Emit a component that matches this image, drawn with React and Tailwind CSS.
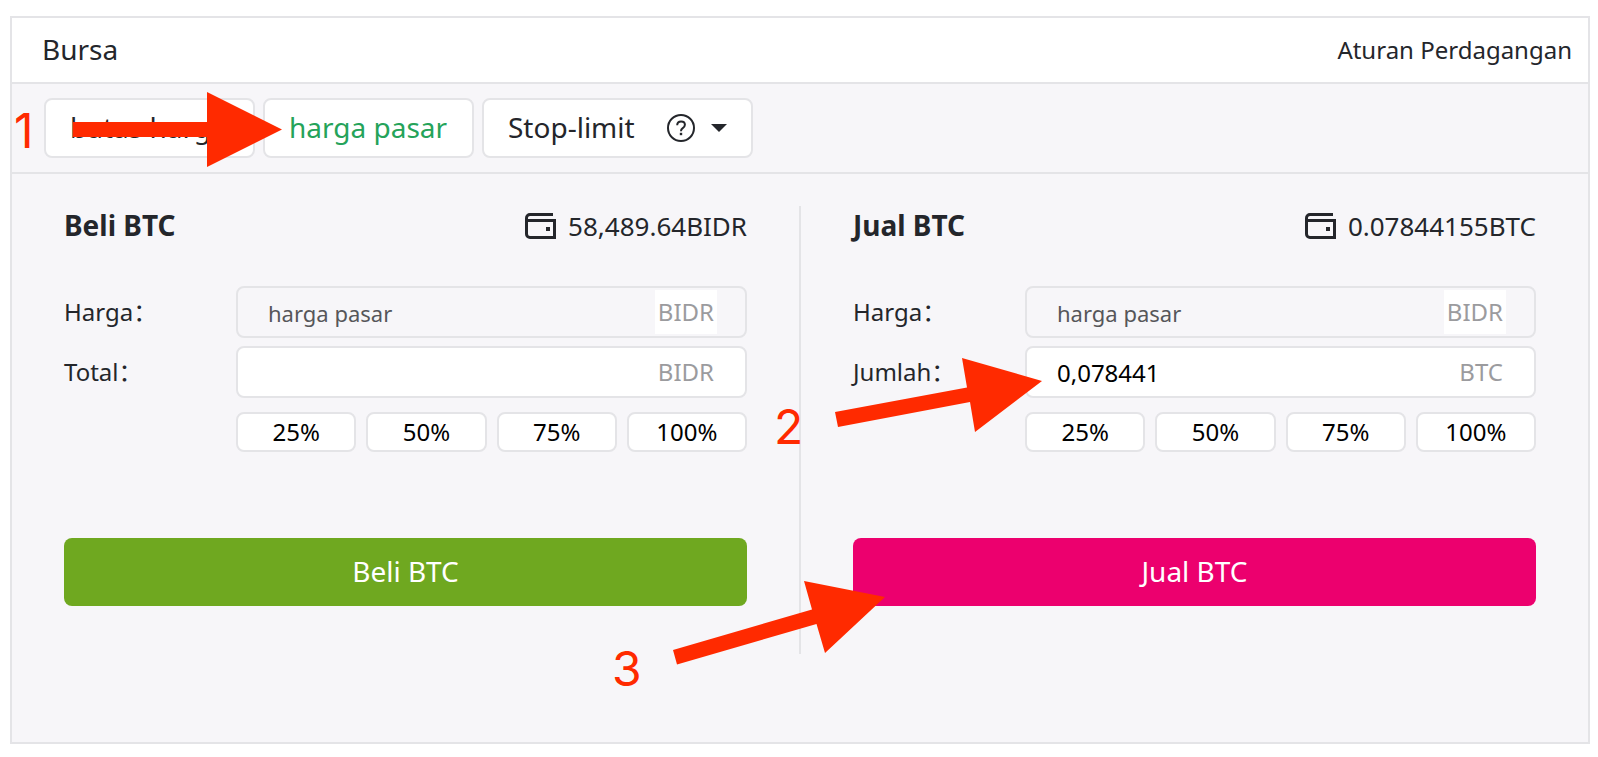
import { useState } from "react"

const percents = ["25%", "50%", "75%", "100%"]

function WalletIcon() {
  return (
    <svg width="31" height="26" viewBox="0 0 31 26" fill="none" stroke="#24262b" strokeWidth="3" aria-hidden="true">
      <path d="M28 1.5H5A3.5 3.5 0 0 0 1.5 5v16A3.5 3.5 0 0 0 5 24.5h24.5v-17H1.5" />
      <path d="M21 14h4v4h-4z" fill="#24262b" stroke="none" />
    </svg>
  )
}

function HelpIcon() {
  return (
    <svg width="28" height="28" viewBox="0 0 28 28" fill="none" stroke="#24262b" strokeWidth="2" aria-hidden="true">
      <circle cx="14" cy="14" r="13" />
      <path d="M10.2 11.2c0-2.4 1.6-3.8 3.9-3.8s3.8 1.3 3.8 3.4c0 2-1.2 2.8-2.4 3.6-1 .7-1.5 1.1-1.5 2.8" />
      <path d="M12.8 18.8h2.4v2.4h-2.4z" fill="#24262b" stroke="none" />
    </svg>
  )
}

function Field({ id, label, unit, value, placeholder, disabled, onChange }) {
  return (
    <div className="flex items-center">
      <label htmlFor={id} className="w-[172px] shrink-0">
        {label}：
      </label>
      <div
        className={`flex h-[52px] min-w-0 flex-1 items-center rounded-lg border-2 border-[#e4e4e7] pr-7 ${
          disabled ? "bg-transparent" : "bg-white"
        }`}
      >
        <input
          id={id}
          type="text"
          value={value}
          placeholder={placeholder}
          disabled={disabled}
          onChange={onChange}
          className="h-full min-w-0 flex-1 bg-transparent pl-[30px] text-black outline-none placeholder:text-[22px] placeholder:text-[#56565a]"
        />
        <span className="flex h-11 items-center bg-white px-[3px] text-[#9b9b9e]">{unit}</span>
      </div>
    </div>
  )
}

function OrderForm({ side, title, balance, amountLabel, amountUnit, initialAmount, buttonClass }) {
  const [amount, setAmount] = useState(initialAmount)

  return (
    <form className="min-w-0 flex-1 px-[52px]" onSubmit={(e) => e.preventDefault()}>
      <div className="flex h-10 items-center justify-between">
        <h2 className="text-[28px] font-bold">{title}</h2>
        <div className="flex items-center gap-3 text-[26px]">
          <WalletIcon />
          <span>{balance}</span>
        </div>
      </div>

      <div className="mt-10 flex flex-col gap-2">
        <Field id={`${side}-price`} label="Harga" unit="BIDR" value="" placeholder="harga pasar" disabled />
        <Field
          id={`${side}-amount`}
          label={amountLabel}
          unit={amountUnit}
          value={amount}
          onChange={(e) => setAmount(e.target.value)}
        />
      </div>

      <div className="mt-[14px] ml-[172px] grid grid-cols-4 gap-[10px]">
        {percents.map((percent) => (
          <button
            key={percent}
            type="button"
            className="flex h-10 items-center justify-center rounded-lg border-2 border-[#e4e4e7] bg-white text-black"
          >
            {percent}
          </button>
        ))}
      </div>

      <button type="submit" className={`mt-[86px] h-[68px] w-full rounded-lg text-[28px] text-white ${buttonClass}`}>
        {title}
      </button>
    </form>
  )
}

function Arrow({ className, width, height, points }) {
  return (
    <svg
      className={`pointer-events-none absolute ${className}`}
      width={width}
      height={height}
      viewBox={`0 0 ${width} ${height}`}
      aria-hidden="true"
    >
      <polygon points={points} fill="#ff2a00" />
    </svg>
  )
}

function Step({ className, children }) {
  return (
    <span className={`pointer-events-none absolute font-[Inter,sans-serif] text-5xl leading-none text-[#ff2a00] ${className}`}>
      {children}
    </span>
  )
}

export default function App() {
  const tab = "flex h-[60px] min-w-[211px] items-center rounded-lg border-2 border-[#e4e4e7] bg-white px-6 text-[28px]"

  return (
    <main className="relative bg-white pt-4 pr-2 pb-[13px] pl-[10px] font-['Noto_Sans','Noto_Sans_CJK_SC',sans-serif] text-2xl text-[#24262b]">
      <section className="border-2 border-[#e4e4e7] bg-[#f7f6f9]">
        <header className="flex h-[66px] items-center justify-between border-b-2 border-[#e4e4e7] bg-white pr-4 pl-[30px]">
          <h1 className="text-[28px]">Bursa</h1>
          <a href="#aturan">Aturan Perdagangan</a>
        </header>

        <nav className="flex gap-2 border-b-2 border-[#e4e4e7] px-8 py-[14px]">
          <button type="button" className={tab}>
            batas harga
          </button>
          <button type="button" className={`${tab} text-[#25a35a]`}>
            harga pasar
          </button>
          <button type="button" className={tab}>
            Stop-limit
            <span className="ml-8">
              <HelpIcon />
            </span>
            <svg className="ml-4" width="16" height="8" viewBox="0 0 16 8" aria-hidden="true">
              <path d="M0 0h16L8 8z" fill="#24262b" />
            </svg>
          </button>
        </nav>

        <div className="flex pt-8 pb-[88px]">
          <OrderForm
            side="buy"
            title="Beli BTC"
            balance="58,489.64BIDR"
            amountLabel="Total"
            amountUnit="BIDR"
            initialAmount=""
            buttonClass="bg-[#6fa820]"
          />
          <div className="h-[448px] w-[2px] bg-[#e4e4e7]" />
          <OrderForm
            side="sell"
            title="Jual BTC"
            balance="0.07844155BTC"
            amountLabel="Jumlah"
            amountUnit="BTC"
            initialAmount="0,078441"
            buttonClass="bg-[#ec006e]"
          />
        </div>
      </section>

      <Step className="top-[107px] left-[14px]">1</Step>
      <Arrow
        className="top-[92px] left-[73px]"
        width={209}
        height={75}
        points="0,30 134,30 134,0 209,37.5 134,75 134,45 0,45"
      />
      <Step className="top-[403px] left-[774px]">2</Step>
      <Arrow
        className="top-[358px] left-[835px]"
        width={207}
        height={74}
        points="0,54 132,29.5 127,0 207,23 140,74 135,44 3,69"
      />
      <Step className="top-[645px] left-[612px]">3</Step>
      <Arrow
        className="top-[581px] left-[673px]"
        width={212}
        height={84}
        points="0,69 139,28.5 131,0 212,16 152,72 143.5,43 4,83.5"
      />
    </main>
  )
}
